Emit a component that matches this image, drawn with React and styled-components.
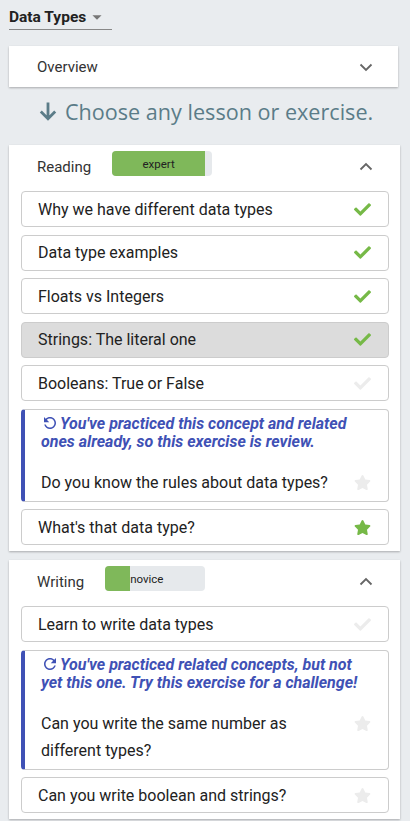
import React from "react";
import styled, { createGlobalStyle } from "styled-components";
import { FaCheck, FaStar } from "react-icons/fa";

const GlobalStyle = createGlobalStyle`
  *, *::before, *::after {
    box-sizing: border-box;
  }
  body {
    margin: 0;
    background: #e9ecef;
    font-family: Roboto, "Liberation Sans", sans-serif;
    color: #222;
  }
`;

const Page = styled.div`
  padding: 4px 10px 12px 9px;
`;

const TitleRow = styled.div`
  display: inline-flex;
  align-items: center;
  width: 103px;
  height: 26px;
  border-bottom: 1px solid #888;
  font-size: 15.5px;
  font-weight: 700;
  color: #222;
  margin-bottom: 16px;
`;

const Card = styled.div`
  background: #fff;
  box-shadow: 0 1px 2px rgba(0, 0, 0, 0.28);
  margin-right: ${(p) => p.$mr || 0}px;
`;

const OverviewBar = styled.div`
  display: flex;
  align-items: center;
  justify-content: space-between;
  height: 41px;
  padding: 0 20px 0 28px;
  font-size: 15px;
  color: #333;
`;

const Prompt = styled.div`
  display: flex;
  align-items: center;
  gap: 5px;
  height: 48px;
  padding-left: 27px;
  margin: 0 0 10px;
  font-family: "Open Sans", "Noto Sans", sans-serif;
  font-size: 21.6px;
  color: #5b7c88;
`;

const Panel = styled(Card)`
  margin-bottom: 9px;
  padding-bottom: 6px;
`;

const PanelHeader = styled.div`
  display: flex;
  align-items: flex-start;
  height: 46px;
  padding: 0 22px 0 28px;
`;

const HeaderLabel = styled.div`
  padding-top: 13px;
  font-size: 15px;
  color: #333;
`;

const Bar = styled.div`
  display: flex;
  align-items: center;
  width: 100px;
  height: 25px;
  margin: 6px 0 0 21px;
  background: #e6e9ec;
  border-radius: 4px;
  overflow: hidden;
  font-size: 11.5px;
  color: #222;
`;

const Fill = styled.div`
  height: 100%;
  background: #7fb85a;
  display: flex;
  align-items: center;
  justify-content: center;
  flex-shrink: 0;
`;

const Toggle = styled.div`
  margin-left: auto;
  padding-top: 10px;
  display: flex;
`;

const List = styled.div`
  display: flex;
  flex-direction: column;
  gap: 7.5px;
  padding: 0 11px 0 12px;
`;

const Row = styled.div`
  display: flex;
  align-items: center;
  justify-content: space-between;
  height: 36px;
  padding: 0 17px 0 16px;
  border: 1px solid #ccc;
  border-radius: 4px;
  background: ${(p) => (p.$active ? "#dcdcdc" : "#fff")};
  font-size: 16px;
  color: #222;
`;

const Review = styled.div`
  padding: 4px 17px 5px 16px;
  border: 1px solid #ccc;
  border-left: 4px solid #3f51b5;
  border-radius: 4px;
`;

const Note = styled.div`
  font-size: 16px;
  font-weight: 700;
  font-style: italic;
  line-height: 18.5px;
  color: #3f51b5;
  margin-bottom: 17px;

  svg {
    vertical-align: -3px;
    margin-right: 1px;
  }
`;

const Question = styled.div`
  display: flex;
  align-items: flex-start;
  justify-content: space-between;
  gap: 20px;
  font-size: 16px;
  line-height: 27px;
  color: #222;

  svg {
    flex-shrink: 0;
    margin-top: 5px;
  }
`;

const Icon = ({ d, size = 24, color = "#666", flip }) => (
  <svg
    width={size}
    height={size}
    viewBox="0 0 24 24"
    style={flip ? { transform: "scaleX(-1)" } : undefined}
  >
    <path d={d} fill={color} />
  </svg>
);

const Chevron = ({ up }) => (
  <svg width="24" height="24" viewBox="0 0 24 24">
    <path
      d={up ? "M6.5 14.5L12 9l5.5 5.5" : "M6.5 9.5L12 15l5.5-5.5"}
      fill="none"
      stroke="#666"
      strokeWidth="1.8"
    />
  </svg>
);

const DownArrow = () => (
  <svg width="24" height="24" viewBox="0 0 24 24">
    <path
      d="M12 3.5v16M4.8 12.5l7.2 7.2 7.2-7.2"
      fill="none"
      stroke="#5b7c88"
      strokeWidth="2.8"
    />
  </svg>
);

const P = {
  drop: "M7 10l5 5 5-5z",
  refresh:
    "M17.65 6.35C16.2 4.9 14.21 4 12 4c-4.42 0-7.99 3.58-7.99 8s3.57 8 7.99 8c3.73 0 6.84-2.55 7.73-6h-2.08c-.82 2.33-3.04 4-5.65 4-3.31 0-6-2.69-6-6s2.69-6 6-6c1.66 0 3.14.69 4.22 1.78L13 11h7V4l-2.35 2.35z",
};

const GREEN = "#76b947";
const FAINT = "#ececec";

const Status = ({ kind }) => {
  if (kind === "done") return <FaCheck size={17} color={GREEN} />;
  if (kind === "todo") return <FaCheck size={17} color={FAINT} />;
  if (kind === "star") return <FaStar size={17} color={GREEN} />;
  return <FaStar size={17} color={FAINT} />;
};

const Progress = ({ pct, label }) => (
  <Bar>
    <Fill style={{ width: `${pct}%` }}>{pct >= 50 && label}</Fill>
    {pct < 50 && label}
  </Bar>
);

const Section = ({ title, pct, level, children }) => (
  <Panel>
    <PanelHeader>
      <HeaderLabel>{title}</HeaderLabel>
      <Progress pct={pct} label={level} />
      <Toggle>
        <Chevron up />
      </Toggle>
    </PanelHeader>
    <List>{children}</List>
  </Panel>
);

const ReviewItem = ({ flip, note, question, status }) => (
  <Review>
    <Note>
      <Icon d={P.refresh} size={18} color="#3f51b5" flip={flip} />
      {note}
    </Note>
    <Question>
      <span>{question}</span>
      <Status kind={status} />
    </Question>
  </Review>
);

export default function App() {
  return (
    <Page>
      <GlobalStyle />
      <TitleRow>
        Data Types
        <Icon d={P.drop} size={22} color="#777" />
      </TitleRow>
      <Card $mr={2}>
        <OverviewBar>
          Overview
          <Chevron />
        </OverviewBar>
      </Card>
      <Prompt>
        <DownArrow />
        Choose any lesson or exercise.
      </Prompt>

      <Section title="Reading" pct={93} level="expert">
        <Row>
          Why we have different data types <Status kind="done" />
        </Row>
        <Row>
          Data type examples <Status kind="done" />
        </Row>
        <Row>
          Floats vs Integers <Status kind="done" />
        </Row>
        <Row $active>
          Strings: The literal one <Status kind="done" />
        </Row>
        <Row>
          Booleans: True or False <Status kind="todo" />
        </Row>
        <ReviewItem
          flip
          note="You've practiced this concept and related ones already, so this exercise is review."
          question="Do you know the rules about data types?"
          status="empty"
        />
        <Row>
          What's that data type? <Status kind="star" />
        </Row>
      </Section>

      <Section title="Writing" pct={25} level="novice">
        <Row>
          Learn to write data types <Status kind="todo" />
        </Row>
        <ReviewItem
          note="You've practiced related concepts, but not yet this one. Try this exercise for a challenge!"
          question="Can you write the same number as different types?"
          status="empty"
        />
        <Row>
          Can you write boolean and strings? <Status kind="empty" />
        </Row>
      </Section>
    </Page>
  );
}
